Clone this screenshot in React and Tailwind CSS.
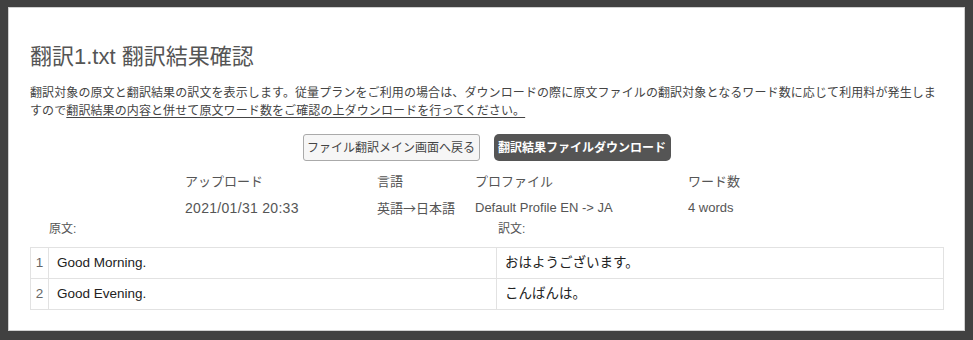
const font = { fontFamily: '"Liberation Sans", "Noto Sans CJK JP", sans-serif' }
const cjk = { fontFamily: '"Noto Sans CJK JP", sans-serif' }

const rows = [
  { no: 1, source: 'Good Morning.', target: 'おはようございます。' },
  { no: 2, source: 'Good Evening.', target: 'こんばんは。' },
]

const info = [
  { label: 'アップロード', value: '2021/01/31 20:33', width: 'w-[192px]', valueClass: 'text-[14px] tracking-[0.3px]' },
  { label: '言語', value: '英語→日本語', width: 'w-[98px]', cjk: true },
  { label: 'プロファイル', value: 'Default Profile EN -> JA', width: 'w-[213px]' },
  { label: 'ワード数', value: '4 words', width: 'w-[95px]' },
]

const App = () => {
  return (
    <div className="w-[973px] h-[340px] overflow-hidden bg-[#414141] pt-[7px] pl-[8px]" style={font}>
      <div className="w-[957px] h-[324px] bg-white border border-[#d0d0d0] px-[21px] pt-[32px]">
        {/* Title */}
        <h1 className="text-[22px] leading-[33px] text-[#555]">翻訳1.txt 翻訳結果確認</h1>

        {/* Description */}
        <p className="mt-[11px] text-[12px] leading-[18px] tracking-[0.1px] text-[#444]">
          翻訳対象の原文と翻訳結果の訳文を表示します。従量プランをご利用の場合は、ダウンロードの際に原文ファイルの翻訳対象となるワード数に応じて利用料が発生しま
          <br />
          すので<span className="underline underline-offset-[2px]">翻訳結果の内容と併せて原文ワード数をご確認の上ダウンロードを行ってください。</span>
        </p>

        {/* Buttons */}
        <div className="mt-[14px] flex justify-center gap-[14px]">
          <button className="h-[27px] w-[177px] rounded-[3px] border border-[#aaa] bg-[#f6f6f6] text-[12px] text-[#444]">
            ファイル翻訳メイン画面へ戻る
          </button>
          <button className="h-[27px] w-[177px] rounded-[5px] bg-[#555] text-[12px] font-bold text-white">
            翻訳結果ファイルダウンロード
          </button>
        </div>

        {/* File info */}
        <div className="mt-[8px] ml-[155px] flex text-[13px] text-[#555]">
          {info.map((item) => (
            <div key={item.label} className={item.width}>
              <div className="leading-[26px]">{item.label}</div>
              <div className={`leading-[26px] ${item.valueClass || ''}`} style={item.cjk ? cjk : undefined}>
                {item.value}
              </div>
            </div>
          ))}
        </div>

        {/* Column labels */}
        <div className="flex text-[12px] leading-[16px] text-[#555]">
          <div className="w-[467px] pl-[19px]">原文:</div>
          <div className="pl-[1px]">訳文:</div>
        </div>

        {/* Result table */}
        <table className="mt-[10px] w-[914px] border-collapse text-[13.5px]">
          <tbody>
            {rows.map((row) => (
              <tr key={row.no} className="h-[31px]">
                <td className="w-[18px] border border-[#e2e2e2] text-center text-[#666]">{row.no}</td>
                <td className="w-[448px] border border-[#e2e2e2] pl-[8px] text-[#222]">{row.source}</td>
                <td className="border border-[#e2e2e2] pl-[8px] text-[#222]">{row.target}</td>
              </tr>
            ))}
          </tbody>
        </table>
      </div>
    </div>
  )
}

export default App
